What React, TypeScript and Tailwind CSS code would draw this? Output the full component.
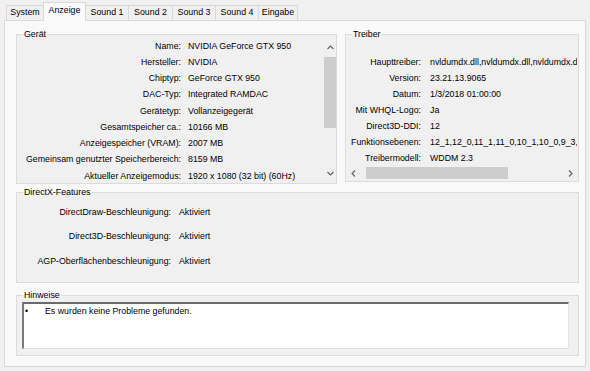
import React from "react";

const geraet: [string, string][] = [
  ["Name:", "NVIDIA GeForce GTX 950"],
  ["Hersteller:", "NVIDIA"],
  ["Chiptyp:", "GeForce GTX 950"],
  ["DAC-Typ:", "Integrated RAMDAC"],
  ["Gerätetyp:", "Vollanzeigegerät"],
  ["Gesamtspeicher ca.:", "10166 MB"],
  ["Anzeigespeicher (VRAM):", "2007 MB"],
  ["Gemeinsam genutzter Speicherbereich:", "8159 MB"],
  ["Aktueller Anzeigemodus:", "1920 x 1080 (32 bit) (60Hz)"],
];

const treiber: [string, string][] = [
  ["Haupttreiber:", "nvldumdx.dll,nvldumdx.dll,nvldumdx.dll,nvldumdx.dll"],
  ["Version:", "23.21.13.9065"],
  ["Datum:", "1/3/2018 01:00:00"],
  ["Mit WHQL-Logo:", "Ja"],
  ["Direct3D-DDI:", "12"],
  ["Funktionsebenen:", "12_1,12_0,11_1,11_0,10_1,10_0,9_3,9_2,9_1"],
  ["Treibermodell:", "WDDM 2.3"],
];

const features: [string, string][] = [
  ["DirectDraw-Beschleunigung:", "Aktiviert"],
  ["Direct3D-Beschleunigung:", "Aktiviert"],
  ["AGP-Oberflächenbeschleunigung:", "Aktiviert"],
];

function Chevron({ dir }: { dir: "up" | "down" | "left" | "right" }) {
  const d =
    dir === "up"
      ? "M0.5 4L3.5 1L6.5 4"
      : dir === "down"
      ? "M0.5 1L3.5 4L6.5 1"
      : dir === "left"
      ? "M4 0.5L1 3.5L4 6.5"
      : "M1 0.5L4 3.5L1 6.5";
  const horiz = dir === "up" || dir === "down";
  return (
    <svg
      width={horiz ? 7 : 5}
      height={horiz ? 5 : 7}
      viewBox={horiz ? "0 0 7 5" : "0 0 5 7"}
    >
      <path d={d} stroke="#606060" strokeWidth="1.1" fill="none" />
    </svg>
  );
}

function Legend({ children }: { children: React.ReactNode }) {
  return (
    <span className="absolute left-[6px] top-[-6px] px-[1px] leading-[11px] bg-[linear-gradient(to_bottom,#f9f9f9_50%,#f0f0f0_50%)]">
      {children}
    </span>
  );
}

const tabs = [
  { label: "System", w: "w-[37px]", cls: "border-l border-t" },
  { label: "Anzeige", w: "w-[43px]", cls: "border-l border-t border-r", sel: true },
  { label: "Sound 1", w: "w-[42px]", cls: "border-t" },
  { label: "Sound 2", w: "w-[44px]", cls: "border-l border-t" },
  { label: "Sound 3", w: "w-[43px]", cls: "border-l border-t" },
  { label: "Sound 4", w: "w-[43px]", cls: "border-l border-t" },
  { label: "Eingabe", w: "w-[40px]", cls: "border-l border-t border-r" },
];

export default function App() {
  return (
    <div className="w-[590px] h-[371px] bg-[#f0f0f0] overflow-hidden font-['Liberation_Sans',Arial,sans-serif] text-[8.8px] text-black">
      {/* Tabs */}
      <div className="relative z-10 flex h-[21px] items-end pl-[6px] -mb-px">
        {tabs.map((t) =>
          t.sel ? (
            <div
              key={t.label}
              className={`${t.w} ${t.cls} h-[19px] border-[#d9d9d9] bg-[#f9f9f9] flex items-center justify-center pb-[2px]`}
            >
              {t.label}
            </div>
          ) : (
            <div
              key={t.label}
              className={`${t.w} ${t.cls} h-[15px] mb-px border-[#d9d9d9] bg-[#f0f0f0] flex items-center justify-center`}
            >
              {t.label}
            </div>
          )
        )}
      </div>

      {/* Panel */}
      <div className="mx-[4px] h-[347px] border border-[#d9d9d9] bg-[#f9f9f9] pl-[11px] pt-[13px]">
        <div className="flex gap-[8px]">
          {/* Gerät */}
          <div className="relative w-[321px] h-[150px] border border-[#dcdcdc] bg-[#f0f0f0] pt-[3px]">
            <Legend>Gerät</Legend>
            <div className="flex h-[144px]">
              <div className="flex-1 overflow-hidden">
                {geraet.map(([l, v]) => (
                  <div key={l} className="flex h-[16.25px] items-center whitespace-nowrap">
                    <div className="w-[164px] shrink-0 flex justify-end">{l}</div>
                    <div className="ml-[7px]">{v}</div>
                  </div>
                ))}
              </div>
              <div className="w-[12px] flex flex-col">
                <div className="h-[18px] flex items-center justify-center">
                  <Chevron dir="up" />
                </div>
                <div className="mt-[1px] h-[71px] bg-[#cdcdcd]" />
                <div className="flex-1" />
                <div className="h-[18px] flex items-center justify-center">
                  <Chevron dir="down" />
                </div>
              </div>
            </div>
          </div>

          {/* Treiber */}
          <div className="relative w-[234px] h-[148px] border border-[#dcdcdc] bg-[#f0f0f0] pt-[20px]">
            <Legend>Treiber</Legend>
            <div className="overflow-hidden mr-[1px]">
              {treiber.map(([l, v]) => (
                <div key={l} className="flex h-[16px] items-center whitespace-nowrap">
                  <div className="w-[75px] shrink-0 flex justify-end">{l}</div>
                  <div className="ml-[9px]">{v}</div>
                </div>
              ))}
            </div>
            <div className="mx-[1px] h-[12px] flex">
              <div className="w-[13px] flex items-center justify-center">
                <Chevron dir="left" />
              </div>
              <div className="ml-[6px] w-[142px] bg-[#cdcdcd]" />
              <div className="flex-1" />
              <div className="w-[13px] flex items-center justify-center">
                <Chevron dir="right" />
              </div>
            </div>
          </div>
        </div>

        {/* DirectX-Features */}
        <div className="relative mt-[8px] w-[563px] h-[91px] border border-[#dcdcdc] bg-[#f0f0f0] pt-[7px]">
          <Legend>DirectX-Features</Legend>
          {features.map(([l, v]) => (
            <div key={l} className="flex h-[24.5px] items-center whitespace-nowrap">
              <div className="w-[154px] shrink-0 flex justify-end">{l}</div>
              <div className="ml-[8px]">{v}</div>
            </div>
          ))}
        </div>

        {/* Hinweise */}
        <div className="relative mt-[12px] w-[563px] h-[61px] border border-[#dcdcdc] bg-[#f0f0f0] pt-[6px] pl-[5px]">
          <Legend>Hinweise</Legend>
          <div className="w-[547px] h-[47px] bg-white border-t-2 border-l-2 border-r border-b border-t-[#6b6b6b] border-l-[#7a7a7a] border-r-[#e3e3e3] border-b-[#e3e3e3] pt-[1px] pl-[1px] flex">
            <div className="w-[20px] leading-[12px]">•</div>
            <div className="leading-[12px]">Es wurden keine Probleme gefunden.</div>
          </div>
        </div>
      </div>
    </div>
  );
}
